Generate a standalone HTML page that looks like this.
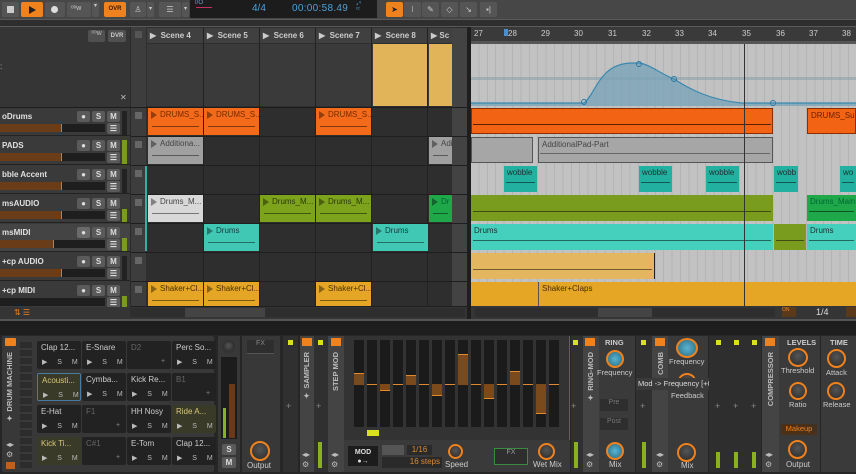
<!DOCTYPE html><html><head><meta charset="utf-8"><style>
*{margin:0;padding:0;box-sizing:border-box}
body{width:856px;height:474px;overflow:hidden;background:#2a2a2a;font-family:"Liberation Sans",sans-serif;position:relative;font-size:8px;color:#ddd}
div{position:absolute}
.b{background:#4a4a4a;border-radius:2px}
.tb{top:2px;height:15px;background:#555;border-radius:2px}
.nm{left:2px;font-weight:bold;font-size:8px;color:#e0e0e0}
.btn{width:13px;height:11px;background:#5a5a5a;border-radius:2px;color:#ddd;font-size:8px;font-weight:bold;text-align:center;line-height:11px}
.vol{left:0;width:105px;height:8px;background:#1e1e1e}
.vol i{position:absolute;left:0;top:0;height:8px;width:62px;background:#6b3c18;border-right:1px solid #d07a30}
.clip{width:55px;height:27px;font-size:8px;padding:2px 0 0 12px;color:#3a2a1a;white-space:nowrap;overflow:hidden}
.clip:before{content:"";position:absolute;left:3px;top:3px;border-left:6px solid rgba(0,0,0,.4);border-top:4px solid transparent;border-bottom:4px solid transparent}
.clip:after{content:"";position:absolute;left:4px;right:4px;top:18px;height:1px;background:rgba(0,0,0,.45)}
.ac{height:26px;font-size:8px;padding:2px 0 0 3px;color:#203030;overflow:hidden;white-space:nowrap}
.ac:after{content:"";position:absolute;left:2px;right:2px;top:16px;height:1px;background:rgba(0,0,0,.5)}
.pad{width:44px;height:28px;background:#222;border-radius:2px;font-size:8px;color:#ccc;padding:2px 4px;white-space:nowrap;overflow:hidden}
.pad span{position:absolute;left:5px;top:17px;font-size:7px;color:#bbb;letter-spacing:2px;white-space:pre}
.kn{border-radius:50%;background:radial-gradient(circle at 50% 40%,#555,#2a2a2a);border:2px solid #333}
.vt{writing-mode:vertical-rl;transform:rotate(180deg);font-size:7.5px;font-weight:bold;color:#bbb;white-space:nowrap}
</style></head><body>
<div style="left:0;top:0;width:856px;height:19px;background:#474747"></div>
<div style="left:0;top:19px;width:856px;height:1px;background:#5a5a5a"></div>
<div style="left:0;top:20px;width:856px;height:6px;background:#2e2e2e"></div>
<div style="left:0;top:26px;width:856px;height:1px;background:#5a5a5a"></div>
<div class="tb" style="left:2px;width:17px"><div style="left:5px;top:4px;width:7px;height:7px;background:#ccc"></div></div>
<div class="tb" style="left:21px;width:22px;background:#f0821e"><div style="left:8px;top:4px;border-left:7px solid #222;border-top:4px solid transparent;border-bottom:4px solid transparent"></div></div>
<div class="tb" style="left:45px;width:20px"><div style="left:6px;top:4px;width:7px;height:7px;border-radius:50%;background:#ddd"></div></div>
<div class="tb" style="left:67px;width:24px;font-size:7px;color:#ccc;padding:3px 4px">ᵒᵒw</div>
<div class="tb" style="left:92px;width:7px;font-size:6px;color:#ccc;text-align:center">▾</div>
<div class="tb" style="left:104px;width:22px;background:#f0821e;color:#3a1a00;font-size:6px;font-weight:bold;text-align:center;line-height:15px">OVR</div>
<div class="tb" style="left:130px;width:16px;color:#ccc;text-align:center;line-height:15px">♙</div>
<div class="tb" style="left:147px;width:7px;font-size:6px;color:#ccc;text-align:center;line-height:15px">▾</div>
<div class="tb" style="left:159px;width:22px;color:#ccc;text-align:center;line-height:15px">☰</div>
<div class="tb" style="left:182px;width:7px;font-size:6px;color:#ccc;text-align:center;line-height:15px">▾</div>
<div style="left:190px;top:0;width:187px;height:18px;background:#1c1c1c"></div>
<div style="left:195px;top:0;font-size:6px;color:#6aa8d8">I/O</div>
<div style="left:196px;top:7px;width:16px;height:1px;background:#c03060"></div>
<div style="left:252px;top:3px;font-size:10px;color:#4aa0d8">4/4</div>
<div style="left:292px;top:3px;font-size:10px;color:#4aa0d8;letter-spacing:.3px">00:00:58.49</div>
<div style="left:356px;top:1px;font-size:6px;color:#4aa0d8;line-height:6px">₄⁴<br>ᶜᶜ</div>
<div class="tb" style="left:386px;width:17px;background:#f0821e;color:#222;text-align:center;line-height:15px">➤</div>
<div class="tb" style="left:404px;width:17px;color:#aaa;text-align:center;line-height:15px">I</div>
<div class="tb" style="left:422px;width:17px;color:#ccc;text-align:center;line-height:15px">✎</div>
<div class="tb" style="left:441px;width:17px;color:#ccc;text-align:center;line-height:15px">◇</div>
<div class="tb" style="left:460px;width:17px;color:#ccc;text-align:center;line-height:15px">↘</div>
<div class="tb" style="left:480px;width:17px;color:#ccc;text-align:center;line-height:15px">▪|</div>

<div style="left:0;top:27px;width:130px;height:280px;background:#3a3a3a"></div>
<div style="left:0;top:27px;width:130px;height:80px;background:#353535"></div>
<div class="b" style="left:88px;top:30px;width:17px;height:12px;background:#505050;font-size:7px;color:#bbb;text-align:center">ᵒᵒw</div>
<div class="b" style="left:108px;top:30px;width:18px;height:12px;background:#505050;font-size:6px;color:#ccc;text-align:center;line-height:12px;font-weight:bold">DVR</div>
<div style="left:120px;top:93px;font-size:8px;color:#bbb">✕</div>
<div style="left:0;top:62px;font-size:8px;color:#bbb">:</div>
<div style="left:131px;top:27px;width:15px;height:280px;background:#3d3d3d"></div>
<div style="left:146px;top:27px;width:306px;height:280px;background:#2e2e2e"></div>
<div style="left:147px;top:28px;width:320px;height:15px;background:#404040"></div>
<div style="left:135px;top:31px;width:7px;height:7px;background:#555"></div>
<div style="left:147px;top:44px;width:320px;height:62px;background:#3a3a3a"></div>
<div style="left:150px;top:31px;font-weight:bold;color:#ccc">▶&nbsp; Scene 4</div>
<div style="left:207px;top:31px;font-weight:bold;color:#ccc">▶&nbsp; Scene 5</div>
<div style="left:263px;top:31px;font-weight:bold;color:#ccc">▶&nbsp; Scene 6</div>
<div style="left:319px;top:31px;font-weight:bold;color:#ccc">▶&nbsp; Scene 7</div>
<div style="left:375px;top:31px;font-weight:bold;color:#ccc">▶&nbsp; Scene 8</div>
<div style="left:431px;top:31px;font-weight:bold;color:#ccc">▶ Sc</div>
<div style="left:373px;top:44px;width:55px;height:62px;background:#e2b45a"></div>
<div style="left:429px;top:44px;width:23px;height:62px;background:#e2b45a"></div>
<div style="left:203px;top:28px;width:1px;height:279px;background:#222"></div>
<div style="left:259px;top:28px;width:1px;height:279px;background:#222"></div>
<div style="left:315px;top:28px;width:1px;height:279px;background:#222"></div>
<div style="left:371px;top:28px;width:1px;height:279px;background:#222"></div>
<div style="left:427px;top:28px;width:1px;height:279px;background:#222"></div>
<div style="left:452px;top:28px;width:15px;height:279px;background:#434343"></div>
<div style="left:467px;top:27px;width:4px;height:292px;background:#1e1e1e"></div>

<div style="left:0;top:107px;width:467px;height:1px;background:#1c1c1c"></div>
<div style="left:0;top:108px;width:130px;height:28px;background:#3a3a3a;border-bottom:1px solid #222"><div class="nm" style="top:4px">oDrums</div><div class="btn" style="left:77px;top:3px">●</div><div class="btn" style="left:92px;top:3px">S</div><div class="btn" style="left:107px;top:3px">M</div><div class="vol" style="top:16px"><i></i></div><div class="btn" style="left:107px;top:15px">☰</div><div style="left:122px;top:3px;width:5px;height:24px;background:#222"></div></div>
<div style="left:0;top:137px;width:130px;height:28px;background:#3a3a3a;border-bottom:1px solid #222"><div class="nm" style="top:4px">PADS</div><div class="btn" style="left:77px;top:3px">●</div><div class="btn" style="left:92px;top:3px">S</div><div class="btn" style="left:107px;top:3px">M</div><div class="vol" style="top:16px"><i></i></div><div class="btn" style="left:107px;top:15px">☰</div><div style="left:122px;top:3px;width:5px;height:24px;background:#7a9a20"></div></div>
<div style="left:0;top:166px;width:130px;height:28px;background:#3a3a3a;border-bottom:1px solid #222"><div class="nm" style="top:4px">bble Accent</div><div class="btn" style="left:77px;top:3px">●</div><div class="btn" style="left:92px;top:3px">S</div><div class="btn" style="left:107px;top:3px">M</div><div class="vol" style="top:16px"><i></i></div><div class="btn" style="left:107px;top:15px">☰</div><div style="left:122px;top:3px;width:5px;height:24px;background:#222"></div></div>
<div style="left:0;top:195px;width:130px;height:28px;background:#3a3a3a;border-bottom:1px solid #222"><div class="nm" style="top:4px">msAUDIO</div><div class="btn" style="left:77px;top:3px">●</div><div class="btn" style="left:92px;top:3px">S</div><div class="btn" style="left:107px;top:3px">M</div><div class="vol" style="top:16px"><i></i></div><div class="btn" style="left:107px;top:15px">☰</div><div style="left:122px;top:14px;width:5px;height:13px;background:#7a9a20"></div></div>
<div style="left:0;top:224px;width:130px;height:28px;background:#444;border-bottom:1px solid #222"><div class="nm" style="top:4px">msMIDI</div><div class="btn" style="left:77px;top:3px;background:#6a6a6a">●</div><div class="btn" style="left:92px;top:3px">S</div><div class="btn" style="left:107px;top:3px">M</div><div class="vol" style="top:16px"><i style="width:54px"></i></div><div class="btn" style="left:107px;top:15px">☰</div><div style="left:122px;top:14px;width:5px;height:13px;background:#7a9a20"></div></div>
<div style="left:0;top:253px;width:130px;height:28px;background:#3a3a3a;border-bottom:1px solid #222"><div class="nm" style="top:4px">+cp AUDIO</div><div class="btn" style="left:77px;top:3px">●</div><div class="btn" style="left:92px;top:3px">S</div><div class="btn" style="left:107px;top:3px">M</div><div class="vol" style="top:16px"><i></i></div><div class="btn" style="left:107px;top:15px">☰</div><div style="left:122px;top:3px;width:5px;height:24px;background:#222"></div></div>
<div style="left:0;top:282px;width:130px;height:25px;background:#3a3a3a;overflow:hidden"><div class="nm" style="top:4px">+cp MIDI</div><div class="btn" style="left:77px;top:3px">●</div><div class="btn" style="left:92px;top:3px">S</div><div class="btn" style="left:107px;top:3px">M</div><div class="vol" style="top:16px"></div><div class="btn" style="left:107px;top:15px">☰</div><div style="left:122px;top:14px;width:5px;height:13px;background:#7a9a20"></div></div>

<div style="left:135px;top:112px;width:7px;height:7px;background:#666"></div>
<div style="left:135px;top:141px;width:7px;height:7px;background:#666"></div>
<div style="left:135px;top:170px;width:7px;height:7px;background:#666"></div>
<div style="left:135px;top:199px;width:7px;height:7px;background:#666"></div>
<div style="left:135px;top:228px;width:7px;height:7px;background:#666"></div>
<div style="left:135px;top:257px;width:7px;height:7px;background:#666"></div>
<div style="left:135px;top:286px;width:7px;height:7px;background:#666"></div>
<div style="left:131px;top:136px;width:336px;height:1px;background:#1e1e1e"></div>
<div style="left:131px;top:165px;width:336px;height:1px;background:#1e1e1e"></div>
<div style="left:131px;top:194px;width:336px;height:1px;background:#1e1e1e"></div>
<div style="left:131px;top:223px;width:336px;height:1px;background:#1e1e1e"></div>
<div style="left:131px;top:252px;width:336px;height:1px;background:#1e1e1e"></div>
<div style="left:131px;top:281px;width:336px;height:1px;background:#1e1e1e"></div>
<div style="left:131px;top:306px;width:336px;height:1px;background:#1e1e1e"></div>

<div class="clip" style="left:148px;top:108px;background:#f26a1a;color:#7a2a00">DRUMS_S...</div>
<div class="clip" style="left:204px;top:108px;width:55px;background:#f26a1a;color:#7a2a00">DRUMS_S...</div>
<div class="clip" style="left:316px;top:108px;background:#f26a1a;color:#7a2a00">DRUMS_S...</div>
<div class="clip" style="left:148px;top:137px;background:#a0a0a0;color:#444">Additiona...</div>
<div class="clip" style="left:429px;top:137px;width:23px;background:#a0a0a0;color:#444">Adi</div>
<div class="clip" style="left:148px;top:195px;background:#d8d8d8;color:#444">Drums_M...</div>
<div class="clip" style="left:260px;top:195px;background:#7da21c;color:#2a3a00">Drums_M...</div>
<div class="clip" style="left:316px;top:195px;background:#7da21c;color:#2a3a00">Drums_M...</div>
<div class="clip" style="left:429px;top:195px;width:23px;background:#1fa84a;color:#063">Dr</div>
<div class="clip" style="left:204px;top:224px;background:#40c8b4;color:#104040">Drums</div>
<div class="clip" style="left:373px;top:224px;background:#40c8b4;color:#104040">Drums</div>
<div class="clip" style="left:148px;top:282px;height:24px;background:#e4a624;color:#4a3000">Shaker+Cl...</div>
<div class="clip" style="left:204px;top:282px;height:24px;background:#e4a624;color:#4a3000">Shaker+Cl...</div>
<div class="clip" style="left:316px;top:282px;height:24px;background:#e4a624;color:#4a3000">Shaker+Cl...</div>
<div style="left:145px;top:166px;width:2px;height:85px;background:#30b0a0"></div>

<div style="left:0;top:307px;width:467px;height:12px;background:#353535"></div>
<div style="left:14px;top:308px;font-size:8px;color:#f0821e">⇅ ☰</div>
<div style="left:130px;top:308px;width:335px;height:9px;background:#2e2e2e"></div>
<div style="left:185px;top:308px;width:80px;height:9px;background:#444"></div>

<div style="left:471px;top:27px;width:385px;height:14px;background:#3a3a3a"></div>
<div style="left:471px;top:41px;width:385px;height:3px;background:#555"></div>
<div style="left:471px;top:44px;width:385px;height:262px;background:repeating-linear-gradient(90deg,#c2c2c2 0 7.4px,#b4b4b4 7.4px 8.4px)"></div>
<div style="left:474px;top:29px;font-size:8px;color:#ccc">27</div>
<div style="left:504px;top:29px;width:4px;height:7px;background:#4a90d0"></div>
<div style="left:508px;top:29px;font-size:8px;color:#ccc">28</div>
<div style="left:541px;top:29px;font-size:8px;color:#ccc">29</div>
<div style="left:574px;top:29px;font-size:8px;color:#ccc">30</div>
<div style="left:608px;top:29px;font-size:8px;color:#ccc">31</div>
<div style="left:642px;top:29px;font-size:8px;color:#ccc">32</div>
<div style="left:675px;top:29px;font-size:8px;color:#ccc">33</div>
<div style="left:708px;top:29px;font-size:8px;color:#ccc">34</div>
<div style="left:742px;top:29px;font-size:8px;color:#ccc">35</div>
<div style="left:776px;top:29px;font-size:8px;color:#ccc">36</div>
<div style="left:809px;top:29px;font-size:8px;color:#ccc">37</div>
<div style="left:842px;top:29px;font-size:8px;color:#ccc">38</div>
<svg style="position:absolute;left:471px;top:44px" width="385" height="62">
<rect x="0" y="33" width="385" height="3" fill="#8aa0a8" opacity=".6"/>
<path d="M0 59 L113 59 C125 50 128 20 160 19 L168 19 C178 20 190 30 203 35 C220 46 240 56 270 59 L385 59 L385 62 L0 62Z" fill="#7aa4b8" opacity=".8"/>
<path d="M0 59 L113 59 C125 50 128 20 160 19 L168 19 C178 20 190 30 203 35 C220 46 240 56 270 59 L385 59" fill="none" stroke="#3a88b0" stroke-width="1.2"/>
<circle cx="113" cy="58" r="2.5" fill="none" stroke="#2a7aa8"/><circle cx="168" cy="20" r="2.5" fill="none" stroke="#2a7aa8"/><circle cx="203" cy="35" r="2.5" fill="none" stroke="#2a7aa8"/><circle cx="302" cy="59" r="2.5" fill="none" stroke="#2a7aa8"/>
</svg>
<div style="left:471px;top:108px;width:302px;height:26px;background:#f26414;border:1px solid #8a3000"></div>
<div style="left:473px;top:124px;width:298px;height:1px;background:#5a2000"></div>
<div style="left:807px;top:108px;width:49px;height:26px;background:#f26414;border:1px solid #8a3000;font-size:8px;color:#6a2000;padding:2px 3px;white-space:nowrap;overflow:hidden">DRUMS_Subtl</div>
<div style="left:471px;top:137px;width:62px;height:26px;background:#a6a6a6;border:1px solid #555"></div>
<div style="left:538px;top:137px;width:235px;height:26px;background:#a6a6a6;border:1px solid #555;font-size:8px;color:#444;padding:2px 3px">AdditionalPad-Part</div>
<div style="left:540px;top:153px;width:230px;height:1px;background:#666"></div>
<div class="ac" style="left:504px;top:166px;width:33px;background:#22b0a0">wobble</div>
<div class="ac" style="left:639px;top:166px;width:33px;background:#22b0a0">wobble</div>
<div class="ac" style="left:706px;top:166px;width:33px;background:#22b0a0">wobble</div>
<div class="ac" style="left:774px;top:166px;width:24px;background:#22b0a0">wobb</div>
<div class="ac" style="left:840px;top:166px;width:16px;background:#22b0a0">wo</div>
<div class="ac" style="left:471px;top:195px;width:302px;background:#7a9c1e"></div>
<div class="ac" style="left:807px;top:195px;width:49px;background:#1fa84a;color:#063">Drums_Main</div>
<div class="ac" style="left:471px;top:224px;width:302px;background:#44d0bc">Drums</div>
<div class="ac" style="left:774px;top:224px;width:32px;background:#7a9c1e"></div>
<div class="ac" style="left:807px;top:224px;width:49px;background:#44d0bc">Drums</div>
<div class="ac" style="left:471px;top:253px;width:184px;background:#e4b660;border-right:1px solid #222"></div>
<div style="left:471px;top:282px;width:385px;height:24px;background:#e4a624"></div>
<div style="left:538px;top:282px;width:1px;height:24px;background:#555"></div>
<div style="left:542px;top:284px;font-size:8px;color:#4a3000">Shaker+Claps</div>
<div style="left:744px;top:44px;width:1px;height:262px;background:#333"></div>
<div style="left:471px;top:306px;width:385px;height:13px;background:#353535"></div>
<div style="left:475px;top:308px;width:300px;height:9px;background:#2e2e2e"></div>
<div style="left:598px;top:308px;width:54px;height:9px;background:#444"></div>
<div style="left:782px;top:307px;width:14px;height:10px;background:#5a3a1a;font-size:5px;color:#f0821e">ON</div>
<div style="left:816px;top:307px;font-size:9px;color:#ddd">1/4</div>
<div style="left:846px;top:307px;width:10px;height:10px;background:#5a3a1a"></div>

<div style="left:0;top:319px;width:856px;height:2px;background:#555"></div>
<div style="left:0;top:321px;width:856px;height:14px;background:#1e1e1e"></div>
<div style="left:0;top:335px;width:856px;height:139px;background:#262626"></div>

<div style="left:2px;top:336px;width:212px;height:136px;background:#383838;border-radius:2px"></div>
<div style="left:5px;top:338px;width:11px;height:8px;background:#f0821e;border-radius:1px"></div>
<div class="vt" style="left:5px;top:352px">✦ DRUM MACHINE</div>
<div style="left:6px;top:440px;font-size:8px;color:#bbb;line-height:10px">◂▸<br>⚙</div>
<div style="left:6px;top:462px;width:9px;height:7px;background:#c0601a"></div>
<div style="left:20px;top:342px;width:12px;height:126px;background:repeating-linear-gradient(180deg,#2c2c2c 0 6px,#3a3a3a 6px 8px)"></div>
<div class="pad" style="left:37px;top:341px">Clap 12...<span>▶  S  M</span></div>
<div class="pad" style="left:82px;top:341px">E-Snare<span>▶  S  M</span></div>
<div class="pad" style="left:127px;top:341px;color:#666">D2<span style="left:34px;color:#888">+</span></div>
<div class="pad" style="left:172px;top:341px">Perc So...<span>▶  S  M</span></div>
<div class="pad" style="left:37px;top:373px;background:#3a3a28;border:1px solid #4a7aa0;color:#d8c878">Acousti...<span>▶  S  M</span></div>
<div class="pad" style="left:82px;top:373px">Cymba...<span>▶  S  M</span></div>
<div class="pad" style="left:127px;top:373px">Kick Re...<span>▶  S  M</span></div>
<div class="pad" style="left:172px;top:373px;color:#666">B1<span style="left:34px;color:#888">+</span></div>
<div class="pad" style="left:37px;top:405px">E-Hat<span>▶  S  M</span></div>
<div class="pad" style="left:82px;top:405px;color:#666">F1<span style="left:34px;color:#888">+</span></div>
<div class="pad" style="left:127px;top:405px">HH Nosy<span>▶  S  M</span></div>
<div class="pad" style="left:172px;top:405px;background:#3a3a28;color:#d8c878">Ride A...<span>▶  S  M</span></div>
<div class="pad" style="left:37px;top:437px;background:#3a3a28;color:#d8c878">Kick Ti...<span>▶  S  M</span></div>
<div class="pad" style="left:82px;top:437px;color:#666">C#1<span style="left:34px;color:#888">+</span></div>
<div class="pad" style="left:127px;top:437px">E-Tom<span>▶  S  M</span></div>
<div class="pad" style="left:172px;top:437px">Clap 12...<span>▶  S  M</span></div>
<div style="left:218px;top:336px;width:22px;height:136px;background:#383838"></div>
<div class="kn" style="left:222px;top:340px;width:13px;height:13px"></div>
<div style="left:221px;top:357px;width:16px;height:82px;background:#1c1c1c"></div>
<div style="left:229px;top:384px;width:6px;height:54px;background:#6a3a18"></div>
<div style="left:223px;top:408px;width:3px;height:30px;background:#8ab020"></div>
<div class="btn" style="left:222px;top:444px;width:14px">S</div>
<div class="btn" style="left:222px;top:457px;width:14px">M</div>
<div style="left:242px;top:336px;width:38px;height:136px;background:#383838"></div>
<div style="left:247px;top:340px;width:27px;height:14px;background:#2e2e2e;border-bottom:1px solid #555;font-size:7px;color:#888;text-align:center">FX</div>
<div class="kn" style="left:250px;top:441px;width:20px;height:20px;border-color:#f0821e"></div>
<div style="left:247px;top:461px;font-size:8px;color:#ccc">Output</div>
<div style="left:283px;top:336px;width:15px;height:136px;background:#303030"></div>
<div style="left:288px;top:340px;width:5px;height:5px;background:#d8e020"></div>
<div style="left:286px;top:401px;color:#888;font-size:9px">+</div>
<div style="left:300px;top:336px;width:14px;height:136px;background:#444"></div>
<div style="left:302px;top:338px;width:10px;height:8px;background:#f0821e"></div>
<div class="vt" style="left:302px;top:352px">✦ SAMPLER</div>
<div style="left:302px;top:450px;font-size:8px;color:#bbb;line-height:10px">◂▸<br>⚙</div>
<div style="left:314px;top:336px;width:14px;height:136px;background:#303030"></div>
<div style="left:318px;top:340px;width:5px;height:5px;background:#d8e020"></div>
<div style="left:316px;top:401px;color:#888;font-size:9px">+</div>
<div style="left:318px;top:442px;width:4px;height:26px;background:#8ab020"></div>
<div style="left:328px;top:336px;width:16px;height:136px;background:#444"></div>
<div style="left:331px;top:338px;width:10px;height:8px;background:#f0821e"></div>
<div class="vt" style="left:331px;top:352px">STEP MOD</div>
<div style="left:331px;top:450px;font-size:8px;color:#bbb;line-height:10px">◂▸<br>⚙</div>
<div style="left:344px;top:336px;width:226px;height:136px;background:#333;border-right:1px solid #3a7a40"></div>
<svg style="position:absolute;left:344px;top:336px" width="226" height="136">
<g fill="#1b1b1b"><rect x="10" y="4" width="10" height="87"/><rect x="23" y="4" width="10" height="87"/><rect x="36" y="4" width="10" height="87"/><rect x="49" y="4" width="10" height="87"/><rect x="62" y="4" width="10" height="87"/><rect x="75" y="4" width="10" height="87"/><rect x="88" y="4" width="10" height="87"/><rect x="101" y="4" width="10" height="87"/><rect x="114" y="4" width="10" height="87"/><rect x="127" y="4" width="10" height="87"/><rect x="140" y="4" width="10" height="87"/><rect x="153" y="4" width="10" height="87"/><rect x="166" y="4" width="10" height="87"/><rect x="179" y="4" width="10" height="87"/><rect x="192" y="4" width="10" height="87"/><rect x="205" y="4" width="10" height="87"/></g>
<g fill="#7a4a1c"><rect x="10" y="37" width="10" height="12"/><rect x="36" y="48" width="10" height="6"/><rect x="62" y="39" width="10" height="10"/><rect x="88" y="48" width="10" height="11"/><rect x="114" y="18" width="10" height="31"/><rect x="140" y="48" width="10" height="14"/><rect x="166" y="35" width="10" height="14"/><rect x="192" y="48" width="10" height="29"/></g>
<g fill="#e08a30"><rect x="10" y="37" width="10" height="1"/><rect x="23" y="48" width="10" height="1"/><rect x="36" y="54" width="10" height="1"/><rect x="49" y="48" width="10" height="1"/><rect x="62" y="39" width="10" height="1"/><rect x="75" y="48" width="10" height="1"/><rect x="88" y="59" width="10" height="1"/><rect x="101" y="48" width="10" height="1"/><rect x="114" y="18" width="10" height="1"/><rect x="127" y="48" width="10" height="1"/><rect x="140" y="62" width="10" height="1"/><rect x="153" y="48" width="10" height="1"/><rect x="166" y="35" width="10" height="1"/><rect x="179" y="48" width="10" height="1"/><rect x="192" y="77" width="10" height="1"/><rect x="205" y="48" width="10" height="1"/></g>
<rect x="23" y="94" width="12" height="6" fill="#d8e020"/>
<rect x="0" y="104" width="226" height="32" fill="#3a3a3a"/>
</svg>
<div style="left:348px;top:446px;width:30px;height:20px;background:#1c1c1c;font-size:7px;font-weight:bold;text-align:center;color:#ddd;line-height:9px;padding-top:2px">MOD<br>●→</div>
<div style="left:382px;top:445px;width:22px;height:10px;background:#555"></div>
<div style="left:407px;top:445px;width:25px;height:10px;background:#2a2a2a;color:#e08a30;font-size:8px;text-align:center">1/16</div>
<div style="left:382px;top:457px;width:60px;height:11px;background:#2a2a2a;color:#e08a30;font-size:8px;text-align:right;padding-right:2px">16 steps</div>
<div class="kn" style="left:448px;top:444px;width:15px;height:15px;border-color:#f0821e"></div>
<div style="left:445px;top:460px;font-size:8px;color:#ccc">Speed</div>
<div style="left:494px;top:448px;width:34px;height:17px;border:1px solid #3a8a40;background:#2e2e2e;font-size:7px;color:#999;text-align:center">FX</div>
<div class="kn" style="left:538px;top:443px;width:17px;height:17px;border-color:#f0821e"></div>
<div style="left:533px;top:460px;font-size:8px;color:#ccc">Wet Mix</div>
<div style="left:571px;top:336px;width:12px;height:136px;background:#303030"></div>
<div style="left:573px;top:340px;width:5px;height:5px;background:#d8e020"></div>
<div style="left:571px;top:401px;color:#888;font-size:9px">+</div>
<div style="left:574px;top:442px;width:4px;height:26px;background:#8ab020"></div>
<div style="left:583px;top:336px;width:16px;height:136px;background:#444"></div>
<div style="left:585px;top:338px;width:10px;height:8px;background:#f0821e"></div>
<div class="vt" style="left:586px;top:352px">✦ RING-MOD</div>
<div style="left:586px;top:450px;font-size:8px;color:#bbb;line-height:10px">◂▸<br>⚙</div>
<div style="left:599px;top:336px;width:36px;height:136px;background:#3a3a3a"></div>
<div style="left:605px;top:338px;font-size:7.5px;font-weight:bold;color:#ccc">RING</div>
<div class="kn" style="left:606px;top:350px;width:18px;height:18px;border-color:#f0821e;background:radial-gradient(circle,#5ab4d0,#2a6a80)"></div>
<div style="left:597px;top:368px;font-size:7.5px;color:#ccc">Frequency</div>
<div style="left:600px;top:399px;width:28px;height:12px;background:#2e2e2e;font-size:7px;color:#777;text-align:center">Pre</div>
<div style="left:600px;top:418px;width:28px;height:12px;background:#2e2e2e;font-size:7px;color:#777;text-align:center">Post</div>
<div class="kn" style="left:606px;top:442px;width:18px;height:18px;border-color:#f0821e;background:radial-gradient(circle,#5ab4d0,#2a6a80)"></div>
<div style="left:609px;top:460px;font-size:8px;color:#ccc">Mix</div>
<div style="left:636px;top:336px;width:16px;height:136px;background:#303030"></div>
<div style="left:641px;top:340px;width:5px;height:5px;background:#d8e020"></div>
<div style="left:640px;top:401px;color:#888;font-size:9px">+</div>
<div style="left:642px;top:442px;width:4px;height:26px;background:#8ab020"></div>
<div style="left:652px;top:336px;width:16px;height:136px;background:#444"></div>
<div style="left:655px;top:338px;width:10px;height:8px;background:#f0821e"></div>
<div class="vt" style="left:656px;top:352px">COMB</div>
<div style="left:656px;top:450px;font-size:8px;color:#bbb;line-height:10px">◂▸<br>⚙</div>
<div style="left:668px;top:336px;width:40px;height:136px;background:#3a3a3a"></div>
<div class="kn" style="left:676px;top:338px;width:22px;height:20px;border-color:#f0821e;background:radial-gradient(circle,#5ab4d0,#2a6a80)"></div>
<div style="left:669px;top:357px;font-size:7.5px;color:#ccc">Frequency</div>
<div class="kn" style="left:678px;top:373px;width:18px;height:16px;border-color:#f0821e"></div>
<div style="left:671px;top:391px;font-size:7.5px;color:#ccc">Feedback</div>
<div style="left:636px;top:378px;width:88px;height:12px;background:#3a3a3a;font-size:7.5px;color:#ddd;padding-left:2px;line-height:12px;white-space:nowrap">Mod -&gt; Frequency [+0.58]</div>
<div class="kn" style="left:677px;top:443px;width:19px;height:19px;border-color:#f0821e"></div>
<div style="left:681px;top:461px;font-size:8px;color:#ccc">Mix</div>
<div style="left:709px;top:336px;width:52px;height:136px;background:#2e2e2e"></div>
<div style="left:716px;top:340px;width:5px;height:5px;background:#d8e020"></div>
<div style="left:734px;top:340px;width:5px;height:5px;background:#d8e020"></div>
<div style="left:752px;top:340px;width:5px;height:5px;background:#d8e020"></div>
<div style="left:715px;top:401px;color:#888;font-size:9px">+</div>
<div style="left:733px;top:401px;color:#888;font-size:9px">+</div>
<div style="left:751px;top:401px;color:#888;font-size:9px">+</div>
<div style="left:716px;top:452px;width:4px;height:16px;background:#8ab020"></div>
<div style="left:734px;top:452px;width:4px;height:16px;background:#8ab020"></div>
<div style="left:752px;top:452px;width:4px;height:16px;background:#8ab020"></div>
<div style="left:762px;top:336px;width:17px;height:136px;background:#444"></div>
<div style="left:765px;top:338px;width:10px;height:8px;background:#f0821e"></div>
<div class="vt" style="left:766px;top:352px">COMPRESSOR</div>
<div style="left:765px;top:450px;font-size:8px;color:#bbb;line-height:10px">◂▸<br>⚙</div>
<div style="left:779px;top:336px;width:41px;height:136px;background:#3a3a3a"></div>
<div style="left:787px;top:338px;font-size:7.5px;font-weight:bold;color:#ccc">LEVELS</div>
<div class="kn" style="left:788px;top:348px;width:20px;height:19px;border-color:#f0821e"></div>
<div style="left:781px;top:366px;font-size:7.5px;color:#ccc">Threshold</div>
<div class="kn" style="left:789px;top:382px;width:18px;height:18px;border-color:#f0821e"></div>
<div style="left:789px;top:400px;font-size:7.5px;color:#ccc">Ratio</div>
<div style="left:781px;top:424px;width:36px;height:11px;background:#4a3018;font-size:7.5px;color:#f0821e;text-align:center">Makeup</div>
<div class="kn" style="left:788px;top:440px;width:19px;height:19px;border-color:#f0821e"></div>
<div style="left:786px;top:460px;font-size:8px;color:#ccc">Output</div>
<div style="left:821px;top:336px;width:35px;height:136px;background:#3a3a3a"></div>
<div style="left:830px;top:338px;font-size:7.5px;font-weight:bold;color:#ccc">TIME</div>
<div class="kn" style="left:827px;top:349px;width:19px;height:19px;border-color:#f0821e"></div>
<div style="left:826px;top:368px;font-size:7.5px;color:#ccc">Attack</div>
<div class="kn" style="left:827px;top:382px;width:18px;height:18px;border-color:#f0821e"></div>
<div style="left:823px;top:400px;font-size:7.5px;color:#ccc">Release</div>
</body></html>
